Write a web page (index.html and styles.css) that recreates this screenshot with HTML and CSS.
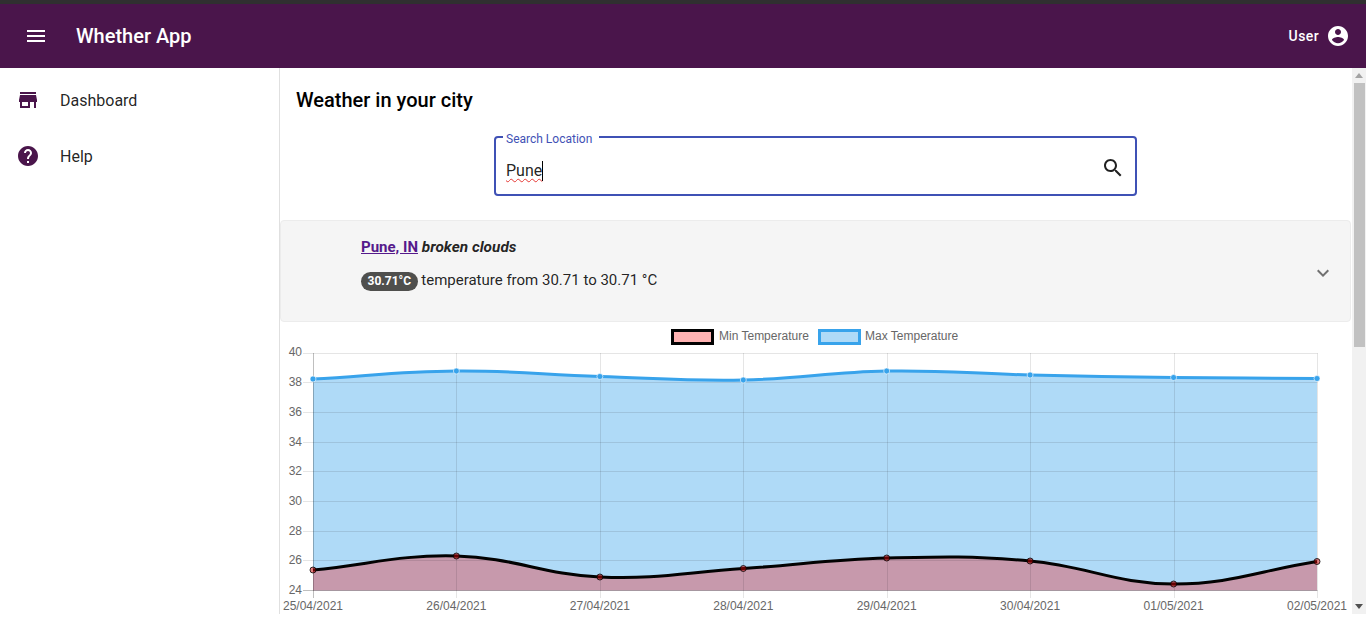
FILE: index.html
```html
<!DOCTYPE html>
<html lang="en">

<head>
    <meta charset="UTF-8">
    <title>Whether App</title>
    <link rel="stylesheet" href="styles.css">
</head>

<body>
    <div class="top_strip"></div>
    <header class="app_bar">
        <svg class="menu_icon" viewBox="0 0 24 24"><path d="M3 18h18v-2H3v2zm0-5h18v-2H3v2zm0-7v2h18V6H3z"/></svg>
        <h1 class="app_title">Whether App</h1>
        <span class="user_name">User</span>
        <svg class="user_icon" viewBox="0 0 24 24"><path d="M12 2C6.48 2 2 6.48 2 12s4.48 10 10 10 10-4.48 10-10S17.52 2 12 2zm0 3c1.66 0 3 1.34 3 3s-1.34 3-3 3-3-1.34-3-3 1.34-3 3-3zm0 14.2c-2.5 0-4.71-1.28-6-3.22.03-1.99 4-3.08 6-3.08 1.99 0 5.97 1.09 6 3.08-1.29 1.94-3.5 3.22-6 3.22z"/></svg>
    </header>

    <div class="app_body">
        <nav class="side_nav">
            <a class="nav_item">
                <svg class="nav_icon" viewBox="0 0 24 24"><path d="M20 4H4v2h16V4zm1 10v-2l-1-5H4l-1 5v2h1v6h10v-6h4v6h2v-6h1zm-9 4H6v-4h6v4z"/></svg>
                Dashboard
            </a>
            <a class="nav_item">
                <svg class="nav_icon" viewBox="0 0 24 24"><path d="M12 2C6.48 2 2 6.48 2 12s4.48 10 10 10 10-4.48 10-10S17.52 2 12 2zm1 17h-2v-2h2v2zm2.07-7.75l-.9.92C13.45 12.9 13 13.5 13 15h-2v-.5c0-1.1.45-2.1 1.17-2.83l1.24-1.26c.37-.36.59-.86.59-1.41 0-1.1-.9-2-2-2s-2 .9-2 2H8c0-2.21 1.79-4 4-4s4 1.79 4 4c0 .88-.36 1.68-.93 2.25z"/></svg>
                Help
            </a>
        </nav>

        <main class="content">
            <h2 class="page_title">Weather in your city</h2>

            <fieldset class="search_box">
                <legend class="search_label">Search Location</legend>
                <span class="search_text">Pune</span>
                <svg class="search_icon" viewBox="0 0 24 24"><path d="M15.5 14h-.79l-.28-.27C15.41 12.59 16 11.11 16 9.5 16 5.91 13.09 3 9.5 3S3 5.91 3 9.5 5.91 16 9.5 16c1.61 0 3.09-.59 4.23-1.57l.27.28v.79l5 4.99L20.49 19l-4.99-5zm-6 0C7.01 14 5 11.99 5 9.5S7.01 5 9.5 5 14 7.01 14 9.5 11.99 14 9.5 14z"/></svg>
            </fieldset>

            <section class="city_panel">
                <div class="city_info">
                    <p class="city_line"><a class="city_link">Pune, IN</a> <em class="city_desc">broken clouds</em></p>
                    <p class="temp_line"><span class="temp_chip">30.71°C</span> temperature from 30.71 to 30.71 °C</p>
                </div>
                <svg class="expand_icon" viewBox="0 0 24 24"><path d="M16.59 8.59L12 13.17 7.41 8.59 6 10l6 6 6-6z"/></svg>
            </section>

            <svg class="chart" viewBox="280 324 1072 290">
                <!-- legend -->
                <rect class="legend_min" x="672.5" y="330.5" width="40" height="13"/>
                <text class="legend_text" x="719" y="340">Min Temperature</text>
                <rect class="legend_max" x="819.5" y="330.5" width="40" height="13"/>
                <text class="legend_text" x="865" y="340">Max Temperature</text>

                <!-- fills -->
                <path class="fill_max" d="M313 379C370.4 375.8 399 371.5 456.4 371C513.8 370.5 542.5 374.7 599.9 376.5C657.3 378.3 685.9 381.1 743.3 380C800.7 378.9 829.3 372 886.7 371C944.1 370 972.7 373.7 1030.1 375C1087.5 376.3 1116.2 376.8 1173.6 377.5C1231 378.2 1259.6 378.1 1317 378.5V590.5H313Z"/>
                <path class="fill_min" d="M313 570C370.4 564.4 399 554.6 456.4 556C513.8 557.4 542.5 574.5 599.9 577C657.3 579.5 685.9 572.3 743.3 568.5C800.7 564.7 829.3 559.5 886.7 558C944.1 556.5 972.7 555.8 1030.1 561C1087.5 566.2 1116.2 583.9 1173.6 584C1231 584.1 1259.6 570.5 1317 561.5V590.5H313Z"/>

                <!-- grid -->
                <path class="grid" d="M303 353.5H1317.5M303 382.5H1317.5M303 412.5H1317.5M303 442.5H1317.5M303 471.5H1317.5M303 501.5H1317.5M303 531.5H1317.5M303 560.5H1317.5"/>
                <path class="grid" d="M456.5 353V598M600.5 353V598M743.5 353V598M887.5 353V598M1030.5 353V598M1174.5 353V598M1317.5 353V598"/>
                <path class="grid_zero" d="M303 590.5H1317.5M313.5 353V598"/>

                <!-- lines -->
                <path class="line_max" d="M313 379C370.4 375.8 399 371.5 456.4 371C513.8 370.5 542.5 374.7 599.9 376.5C657.3 378.3 685.9 381.1 743.3 380C800.7 378.9 829.3 372 886.7 371C944.1 370 972.7 373.7 1030.1 375C1087.5 376.3 1116.2 376.8 1173.6 377.5C1231 378.2 1259.6 378.1 1317 378.5"/>
                <path class="line_min" d="M313 570C370.4 564.4 399 554.6 456.4 556C513.8 557.4 542.5 574.5 599.9 577C657.3 579.5 685.9 572.3 743.3 568.5C800.7 564.7 829.3 559.5 886.7 558C944.1 556.5 972.7 555.8 1030.1 561C1087.5 566.2 1116.2 583.9 1173.6 584C1231 584.1 1259.6 570.5 1317 561.5"/>

                <!-- points -->
                <g class="point_max">
                    <circle cx="313" cy="379" r="3"/><circle cx="456.4" cy="371" r="3"/><circle cx="599.9" cy="376.5" r="3"/><circle cx="743.3" cy="380" r="3"/>
                    <circle cx="886.7" cy="371" r="3"/><circle cx="1030.1" cy="375" r="3"/><circle cx="1173.6" cy="377.5" r="3"/><circle cx="1317" cy="378.5" r="3"/>
                </g>
                <g class="point_min">
                    <circle cx="313" cy="570" r="3"/><circle cx="456.4" cy="556" r="3"/><circle cx="599.9" cy="577" r="3"/><circle cx="743.3" cy="568.5" r="3"/>
                    <circle cx="886.7" cy="558" r="3"/><circle cx="1030.1" cy="561" r="3"/><circle cx="1173.6" cy="584" r="3"/><circle cx="1317" cy="561.5" r="3"/>
                </g>

                <!-- y axis -->
                <g class="tick_y">
                    <text x="302" y="356">40</text><text x="302" y="386">38</text><text x="302" y="416">36</text><text x="302" y="446">34</text>
                    <text x="302" y="475">32</text><text x="302" y="505">30</text><text x="302" y="535">28</text><text x="302" y="564">26</text><text x="302" y="594">24</text>
                </g>

                <!-- x axis -->
                <g class="tick_x">
                    <text x="313" y="610">25/04/2021</text><text x="456.4" y="610">26/04/2021</text><text x="599.9" y="610">27/04/2021</text><text x="743.3" y="610">28/04/2021</text>
                    <text x="886.7" y="610">29/04/2021</text><text x="1030.1" y="610">30/04/2021</text><text x="1173.6" y="610">01/05/2021</text><text x="1317" y="610">02/05/2021</text>
                </g>
            </svg>
        </main>

        <div class="scroll_track">
            <span class="scroll_up"></span>
            <span class="scroll_thumb"></span>
            <span class="scroll_down"></span>
        </div>
    </div>
</body>

</html>
```

FILE: styles.css
```css
* {
    box-sizing: border-box;
}

body {
    margin: 0;
    background-color: #fff;
    font-family: Roboto, "Liberation Sans", sans-serif;
    overflow: hidden;
}

.top_strip {
    height: 4px;
    background-color: #303030;
}

.app_bar {
    display: flex;
    align-items: center;
    height: 64px;
    padding: 0 16px 0 24px;
    background-color: #4a154b;
    color: #fff;
}

.menu_icon {
    width: 24px;
    height: 24px;
    fill: #fff;
}

.app_title {
    margin: 0 0 0 28px;
    font-size: 20px;
    font-weight: 500;
    line-height: 32px;
}

.user_name {
    margin-left: auto;
    font-size: 14px;
    font-weight: 500;
    letter-spacing: 0.4px;
}

.user_icon {
    width: 24px;
    height: 24px;
    margin-left: 7px;
    fill: #fff;
}

.app_body {
    display: flex;
    height: 546px;
}

.side_nav {
    flex: 0 0 280px;
    padding-top: 4px;
    border-right: 1px solid #e0e0e0;
}

.nav_item {
    display: flex;
    align-items: center;
    height: 56px;
    padding-left: 16px;
    font-size: 16px;
    color: rgba(0, 0, 0, 0.87);
}

.nav_icon {
    width: 24px;
    height: 24px;
    margin-right: 20px;
    fill: #4a154b;
}

.content {
    flex: 1;
    min-width: 0;
    overflow: hidden;
}

.page_title {
    margin: 0;
    padding: 16px 16px 0;
    font-size: 20px;
    font-weight: 500;
    line-height: 32px;
    color: #000;
}

.search_box {
    display: flex;
    align-items: center;
    justify-content: space-between;
    width: 643px;
    height: 67px;
    margin: 13px 0 0 214px;
    padding: 0 10px 0 10px;
    border: 2px solid #3f51b5;
    border-radius: 4px;
}

.search_label {
    margin-left: -3px;
    padding: 4px 7px 0 3px;
    font-size: 12px;
    line-height: 12px;
    color: #3f51b5;
}

.search_text {
    margin-top: 3px;
    font-size: 16px;
    line-height: 20px;
    color: rgba(0, 0, 0, 0.87);
    border-right: 1px solid #000;
    text-decoration: underline wavy #e53935 1px;
    text-decoration-skip-ink: none;
    text-underline-offset: 2px;
}

.search_icon {
    width: 24px;
    height: 24px;
    margin-top: -3px;
    fill: rgba(0, 0, 0, 0.87);
}

.city_panel {
    display: flex;
    align-items: center;
    justify-content: space-between;
    height: 102px;
    margin: 24px 1px 0 0;
    padding: 0 15px 0 80px;
    background-color: #f5f5f5;
    border: 1px solid #ececec;
    border-radius: 4px;
}

.city_info {
    margin-bottom: 15px;
}

.city_line {
    margin: 0 0 13px;
    font-size: 15.4px;
    font-weight: 700;
    line-height: 20px;
}

.city_link {
    font-size: 15px;
    color: #551a8b;
    text-decoration: underline;
}

.city_desc {
    color: rgba(0, 0, 0, 0.87);
}

.temp_line {
    margin: 0;
    font-size: 15px;
    line-height: 20px;
    color: rgba(0, 0, 0, 0.87);
}

.temp_chip {
    display: inline-block;
    padding: 0 6.5px;
    background-color: #4f4f4d;
    border-radius: 10px;
    font-size: 12px;
    font-weight: 700;
    line-height: 19px;
    color: #fff;
}

.expand_icon {
    width: 24px;
    height: 24px;
    margin-top: 3px;
    fill: rgba(0, 0, 0, 0.54);
}

.chart {
    display: block;
    width: 1072px;
    height: 290px;
    margin-top: 2px;
    font-family: "Liberation Sans", Arial, sans-serif;
    font-size: 12px;
    fill: #666;
    opacity: 0.99;
}

.legend_min {
    fill: rgba(255, 0, 0, 0.3);
    stroke: #000;
    stroke-width: 3;
}

.legend_max {
    fill: rgba(54, 162, 235, 0.4);
    stroke: #36a2eb;
    stroke-width: 3;
}

.fill_max {
    fill: rgba(54, 162, 235, 0.4);
}

.fill_min {
    fill: rgba(255, 0, 0, 0.3);
}

.grid {
    fill: none;
    stroke: rgba(0, 0, 0, 0.1);
}

.grid_zero {
    fill: none;
    stroke: rgba(0, 0, 0, 0.25);
}

.line_max {
    fill: none;
    stroke: #36a2eb;
    stroke-width: 3;
}

.line_min {
    fill: none;
    stroke: #000;
    stroke-width: 3;
}

.point_max circle {
    fill: #36a2eb;
    stroke: rgba(255, 255, 255, 0.6);
}

.point_min circle {
    fill: rgba(200, 0, 0, 0.5);
    stroke: rgba(0, 0, 0, 0.8);
}

.tick_y text {
    text-anchor: end;
}

.tick_x text {
    text-anchor: middle;
}

.scroll_track {
    flex: 0 0 14px;
    display: flex;
    flex-direction: column;
    align-items: center;
    background-color: #f1f1f1;
}

.scroll_up {
    width: 0;
    height: 0;
    margin: 5px 0 5px;
    border-left: 4px solid transparent;
    border-right: 4px solid transparent;
    border-bottom: 5px solid #a3a3a3;
}

.scroll_thumb {
    width: 11px;
    height: 264px;
    background-color: #c1c1c1;
}

.scroll_down {
    width: 0;
    height: 0;
    margin-top: auto;
    margin-bottom: 5px;
    border-left: 4px solid transparent;
    border-right: 4px solid transparent;
    border-top: 5px solid #505050;
}
```
